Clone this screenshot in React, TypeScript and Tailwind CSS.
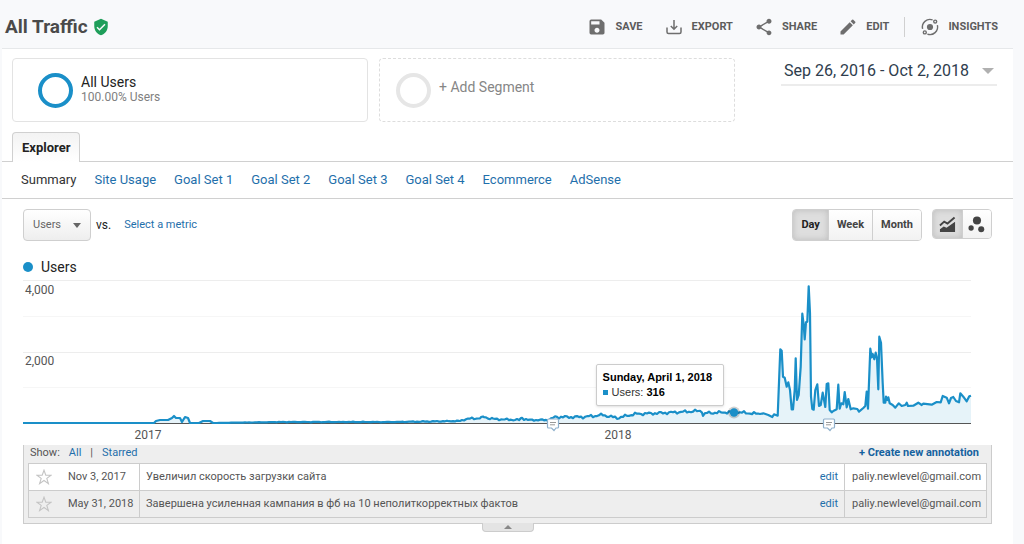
import { useState, type ReactNode } from "react";
import { MdEdit, MdSave, MdShare, MdVerifiedUser } from "react-icons/md";

// ── Types ──────────────────────────────────────────────────────

type Point = [number, number];

interface Annotation {
  date: string;
  text: string;
  author: string;
}

// ── Data ───────────────────────────────────────────────────────

const REPORT_TABS = [
  "Summary",
  "Site Usage",
  "Goal Set 1",
  "Goal Set 2",
  "Goal Set 3",
  "Goal Set 4",
  "Ecommerce",
  "AdSense",
];

const ANNOTATIONS: Annotation[] = [
  {
    date: "Nov 3, 2017",
    text: "Увеличил скорость загрузки сайта",
    author: "paliy.newlevel@gmail.com",
  },
  {
    date: "May 31, 2018",
    text: "Завершена усиленная кампания в фб на 10 неполиткорректных фактов",
    author: "paliy.newlevel@gmail.com",
  },
];

const BASELINE = 143;

// Low traffic, as chart coordinates
const QUIET: Point[] = [
  [0, 143], [131, 143], [133, 141], [137, 140], [145, 140], [149, 138], [151, 136],
  [153, 138], [157, 138], [159, 142], [162, 137], [165, 138], [167, 143], [176, 143],
  [180, 141], [187, 141], [190, 143],
];

// Slow growth: trend line that gets a daily ripple on top
const TREND: Point[] = [
  [190, 143], [260, 142], [370, 142], [437, 141], [443, 139], [458, 138], [461, 137],
  [470, 139], [496, 140], [499, 138], [505, 140], [526, 140], [532, 137], [560, 137],
  [580, 135], [594, 138], [612, 134], [640, 133], [675, 131], [679, 131], [680, 135],
  [684, 133], [711, 132], [737, 134],
];

// Busy period, sampled on a grid three times finer than the chart
const BUSY: Point[] = [
  [0, 432], [10, 430], [25, 435], [37, 441], [42, 433], [53, 437], [61, 238], [65, 242],
  [69, 320], [74, 323], [80, 350], [85, 337], [90, 360], [95, 418], [99, 418], [104, 360],
  [107, 265], [111, 390], [116, 375], [122, 290], [127, 131], [131, 165], [134, 208],
  [138, 157], [142, 155], [146, 49], [150, 130], [153, 380], [157, 417], [161, 419],
  [166, 360], [172, 343], [177, 408], [182, 405], [188, 368], [196, 411], [200, 342],
  [205, 340], [209, 420], [215, 427], [220, 423], [230, 418], [235, 344], [239, 416],
  [244, 400], [250, 403], [254, 366], [260, 412], [265, 387], [272, 418], [280, 415],
  [292, 417], [297, 425], [310, 414], [316, 408], [320, 365], [324, 416], [331, 236],
  [335, 262], [338, 252], [343, 268], [347, 248], [351, 265], [355, 358], [358, 200],
  [363, 218], [368, 340], [371, 398], [376, 398], [378, 380], [382, 390], [385, 382],
  [389, 400], [398, 405], [406, 413], [416, 400], [425, 408], [436, 405], [440, 398],
  [444, 408], [460, 407], [475, 398], [485, 405], [490, 401], [515, 404], [530, 396],
  [542, 397], [548, 378], [560, 383], [567, 400], [573, 384], [580, 381], [588, 393],
  [597, 397], [601, 370], [610, 380], [620, 394], [628, 379], [633, 377],
];

function withRipple(trend: Point[]): Point[] {
  const out: Point[] = [];
  for (let i = 0; i < trend.length - 1; i++) {
    const [x0, y0] = trend[i];
    const [x1, y1] = trend[i + 1];
    for (let x = x0; x < x1; x += 2) {
      const y = y0 + ((y1 - y0) * (x - x0)) / (x1 - x0);
      const size = Math.min(1.6, (BASELINE - y) * 0.3);
      out.push([x, y + size * Math.sin(x * 0.9) * Math.cos(x * 0.37)]);
    }
  }
  return out;
}

const SERIES: Point[] = [
  ...QUIET,
  ...withRipple(TREND),
  ...BUSY.map(([x, y]): Point => [737 + x / 3, y / 3 - 10]),
];

const LINE = SERIES.map(([x, y]) => `${x.toFixed(1)},${y.toFixed(1)}`).join(" ");

// ── Page ───────────────────────────────────────────────────────

export default function App() {
  return (
    <div className="min-h-screen bg-[#f8f9fb] font-[Roboto,sans-serif] text-[#222]">
      <Header />
      <main className="mr-[11px] ml-0.5 min-h-[496px] border-t border-[#e6e8ea] bg-white">
        <Segments />
        <ExplorerTabs />
        <div className="px-[21px] pt-2.5">
          <ChartToolbar />
          <UsersChart />
          <Annotations />
        </div>
      </main>
    </div>
  );
}

// ── Header ─────────────────────────────────────────────────────

function Header() {
  return (
    <header className="flex h-12 items-center justify-between pt-1.5 pr-[26px] pl-[5px]">
      <div className="flex items-center gap-1">
        <h1 className="text-[19px] font-bold text-[#4a4a4a]">All Traffic</h1>
        <MdVerifiedUser className="size-[18px] text-[#1e9e5a]" />
      </div>
      <div className="flex items-center gap-[21px] text-[#5c5c5c]">
        <Action label="SAVE" icon={<MdSave className="size-5" />} />
        <Action label="EXPORT" icon={<ExportIcon />} />
        <Action label="SHARE" icon={<MdShare className="size-5" />} />
        <div className="flex items-center gap-[15px]">
          <Action label="EDIT" icon={<MdEdit className="size-5" />} />
          <div className="h-5 w-px bg-[#d0d0d0]" />
          <Action label="INSIGHTS" icon={<InsightsIcon />} />
        </div>
      </div>
    </header>
  );
}

function Action({ label, icon }: { label: string; icon: ReactNode }) {
  return (
    <button type="button" className="flex items-center gap-2 text-[11px] font-bold">
      <span className="text-[#6e6e6e]">{icon}</span>
      {label}
    </button>
  );
}

function ExportIcon() {
  return (
    <svg className="size-5" viewBox="0 0 20 20" fill="none" stroke="currentColor" strokeWidth="1.5">
      <path d="M3 10.5V15a1.5 1.5 0 0 0 1.5 1.5h11A1.5 1.5 0 0 0 17 15v-4.5M10 3v9M6.8 9l3.2 3.2L13.2 9" />
    </svg>
  );
}

function InsightsIcon() {
  return (
    <svg className="size-5" viewBox="0 0 20 20" fill="none" stroke="currentColor" strokeWidth="1.4">
      <circle cx="10" cy="10" r="3.1" fill="currentColor" stroke="none" />
      <circle cx="15.2" cy="4.6" r="1.5" />
      <circle cx="4.8" cy="15.4" r="1.5" />
      <path d="M2.6 11.8A7.6 7.6 0 0 1 12.6 2.9M17.4 8.2A7.6 7.6 0 0 1 7.4 17.1" />
    </svg>
  );
}

// ── Segments ───────────────────────────────────────────────────

function Segments() {
  return (
    <div className="flex items-start gap-[46px] pt-[9px] pr-4 pl-2.5">
      <div className="grid flex-1 grid-cols-2 gap-[11px]">
        <button
          type="button"
          className="flex h-16 items-center gap-2 rounded border border-[#e3e3e3] pl-[25px] text-left"
        >
          <span className="size-[35px] rounded-full border-4 border-[#1a8fc8]" />
          <span className="pb-0.5">
            <span className="block text-sm leading-4">All Users</span>
            <span className="block text-xs leading-[14px] text-[#808080]">100.00% Users</span>
          </span>
        </button>
        <button
          type="button"
          className="flex h-16 items-center gap-2 rounded border border-dashed border-[#ddd] pl-4 text-sm text-[#868686]"
        >
          <span className="size-[35px] rounded-full border-4 border-[#e6e6e6]" />
          <span className="pb-1.5">+ Add Segment</span>
        </button>
      </div>
      <button
        type="button"
        aria-haspopup="dialog"
        className="flex h-7 w-[216px] items-center justify-between border-b-2 border-[#ececec] pr-[3px] pl-[3px] text-base text-[#2e3d4d]"
      >
        Sep 26, 2016 - Oct 2, 2018
        <Caret className="h-1.5 w-3 text-[#b0b0b0]" />
      </button>
    </div>
  );
}

function Caret({ className }: { className: string }) {
  return (
    <svg className={className} viewBox="0 0 10 6" preserveAspectRatio="none" fill="currentColor">
      <path d="M0 0h10L5 6z" />
    </svg>
  );
}

// ── Tabs ───────────────────────────────────────────────────────

function ExplorerTabs() {
  return (
    <>
      <div className="mt-2.5 flex border-b border-[#d0d0d0] pl-2.5">
        <button
          type="button"
          className="-mb-px h-[30px] rounded-t-sm border border-b-0 border-[#d0d0d0] bg-linear-to-b from-[#f3f3f3] to-white px-[9px] text-[13px] font-bold"
        >
          Explorer
        </button>
      </div>
      <nav className="flex h-[37px] items-center gap-[18px] border-b border-[#d0d0d0] pl-[19px] text-[13px]">
        {REPORT_TABS.map((tab, i) => (
          <a key={tab} href="#" className={i === 0 ? "text-[#333]" : "text-[#1f6fab]"}>
            {tab}
          </a>
        ))}
      </nav>
    </>
  );
}

// ── Chart toolbar ──────────────────────────────────────────────

const PRESSED = "bg-[#dedede] text-[#222] shadow-[inset_0_0_6px_#bbb]";
const RAISED = "bg-linear-to-b from-white to-[#f2f2f2] text-[#444]";

function ChartToolbar() {
  const [range, setRange] = useState("Day");

  return (
    <div className="flex items-start justify-between">
      <div className="flex items-center">
        <div className="relative">
          <select
            aria-label="Metric"
            className="h-8 w-[68px] appearance-none rounded-sm border border-[#cfcfcf] bg-linear-to-b from-white to-[#eee] pl-[9px] text-[11px] text-[#666]"
          >
            <option>Users</option>
          </select>
          <Caret className="pointer-events-none absolute top-3.5 right-2.5 h-[5px] w-2 text-[#666]" />
        </div>
        <span className="ml-[5px] text-xs">vs.</span>
        <a href="#" className="ml-[13px] text-[11px] text-[#1f6fab]">
          Select a metric
        </a>
      </div>
      <div className="flex items-start gap-2.5">
        <div className="flex h-8 divide-x divide-[#cfcfcf] overflow-hidden rounded-sm border border-[#cfcfcf] text-[11px] font-bold">
          {["Day", "Week", "Month"].map((name) => (
            <button
              key={name}
              type="button"
              onClick={() => setRange(name)}
              className={`px-2 ${range === name ? PRESSED : RAISED}`}
            >
              {name}
            </button>
          ))}
        </div>
        <div className="flex h-[30px] divide-x divide-[#cfcfcf] overflow-hidden rounded-sm border border-[#cfcfcf]">
          <button type="button" aria-label="Line chart" className={`w-[30px] px-1.5 ${PRESSED}`}>
            <svg className="size-[17px]" viewBox="0 0 18 18">
              <path d="M1 17v-3l4-3 3 1.5L17 6v11z" fill="#444" />
              <path d="M1 10l4.5-4 3.5 2 7.5-6.5" fill="none" stroke="#444" strokeWidth="2" />
            </svg>
          </button>
          <button type="button" aria-label="Motion chart" className={`w-7 px-[5px] ${RAISED}`}>
            <svg className="size-[17px]" viewBox="0 0 18 18" fill="#444">
              <circle cx="9.5" cy="4.7" r="4.3" />
              <circle cx="3.3" cy="12.7" r="2.8" />
              <circle cx="14" cy="14" r="3.2" />
            </svg>
          </button>
        </div>
      </div>
    </div>
  );
}

// ── Chart ──────────────────────────────────────────────────────

function UsersChart() {
  return (
    <section className="mr-[21px]">
      <div className="mt-4 flex h-5 items-center gap-2 text-sm">
        <span className="size-2.5 rounded-full bg-[#1a8fc8]" />
        Users
      </div>
      <div className="relative mt-[3px]">
        <svg className="block h-auto w-full overflow-visible" viewBox="0 0 948 165" role="img" aria-label="Users by day">
          <path d="M0 .5H948M0 72.5H948" stroke="#ededed" />
          <path d="M0 36.5H948M0 107.5H948" stroke="#f6f6f6" />
          <polygon points={`0,${BASELINE} ${LINE} 948,${BASELINE}`} fill="#1a8fc8" fillOpacity="0.11" />
          <path d="M0 143.5H948" stroke="#555" />
          <polyline points={LINE} fill="none" stroke="#1a8fc8" strokeWidth="2.2" strokeLinejoin="round" />
          <g fontSize="12" fill="#555">
            <text x="2" y="14">4,000</text>
            <text x="2" y="85">2,000</text>
            <text x="125" y="159" textAnchor="middle">2017</text>
            <text x="595" y="159" textAnchor="middle">2018</text>
          </g>
          <circle cx="711" cy="132.5" r="6" fill="#000" fillOpacity="0.18" />
          <circle cx="711" cy="132.5" r="4.2" fill="#1a8fc8" />
          <NoteMarker x={530} />
          <NoteMarker x={806} />
        </svg>
        <div className="absolute top-[51%] left-[60.4%] h-[42px] w-32 rounded-xs border border-[#ccc] bg-white px-1.5 pt-[5px] font-['Liberation_Sans',sans-serif] text-[11px] leading-[15px] whitespace-nowrap text-black shadow-sm">
          <div className="font-bold">Sunday, April 1, 2018</div>
          <div className="flex items-center gap-1">
            <span className="size-[5px] bg-[#1a8fc8]" />
            <span className="text-[#333]">
              Users: <b className="text-black">316</b>
            </span>
          </div>
        </div>
      </div>
    </section>
  );
}

function NoteMarker({ x }: { x: number }) {
  return (
    <g transform={`translate(${x} 144)`}>
      <path
        d="M-4.5-5h9q1 0 1 1v7q0 1-1 1H3L1 6.5-1.5 4h-3q-1 0-1-1v-7q0-1 1-1z"
        fill="#fff"
        stroke="#8fb0cc"
        strokeWidth="1.2"
      />
      <path d="M-3-1.5h6M-3 .8h5" stroke="#999" />
    </g>
  );
}

// ── Annotations ────────────────────────────────────────────────

function Annotations() {
  return (
    <section className="text-[11px] text-[#555]">
      <div className="border border-t-0 border-[#ccc] bg-[#eee] px-1 pb-[5px]">
        <div className="flex h-[18px] items-center justify-between pr-2 pb-0.5 pl-0.5">
          <div className="flex gap-[9px]">
            <span>Show:</span>
            <a href="#" className="text-[#1f6fab]">All</a>
            <span>|</span>
            <a href="#" className="text-[#1f6fab]">Starred</a>
          </div>
          <a href="#" className="font-bold text-[#15629f]">+ Create new annotation</a>
        </div>
        <table className="w-full border-collapse border border-[#ccc]">
          <tbody>
            {ANNOTATIONS.map((note) => (
              <tr key={note.date} className="h-[27px] border-b border-[#ccc] odd:bg-white">
                <td className="w-[111px] border-r border-[#ccc] pl-[7px]">
                  <div className="flex items-center gap-4">
                    <button type="button" aria-label={`Star ${note.date}`}>
                      <StarIcon />
                    </button>
                    {note.date}
                  </div>
                </td>
                <td className="pl-1.5">{note.text}</td>
                <td className="w-10 border-r border-[#ccc] pr-1.5 text-right">
                  <a href="#" className="text-[#1f6fab]">edit</a>
                </td>
                <td className="w-[142px] pl-[7px]">{note.author}</td>
              </tr>
            ))}
          </tbody>
        </table>
      </div>
      <button
        type="button"
        aria-label="Hide annotations"
        className="relative mx-auto -mt-px flex h-[9px] w-[52px] items-center justify-center rounded-b-sm border border-t-0 border-[#ccc] bg-[#e4e4e4]"
      >
        <Caret className="h-1 w-2 rotate-180 text-[#888]" />
      </button>
    </section>
  );
}

function StarIcon() {
  return (
    <svg className="block size-4" viewBox="0 0 16 16" fill="none" stroke="#c4c4c4" strokeWidth="1.1">
      <path d="M8 1.2l1.8 5h5.2l-4.2 3.2 1.6 5.2L8 11.5l-4.4 3.1 1.6-5.2L1 6.2h5.2z" />
    </svg>
  );
}
